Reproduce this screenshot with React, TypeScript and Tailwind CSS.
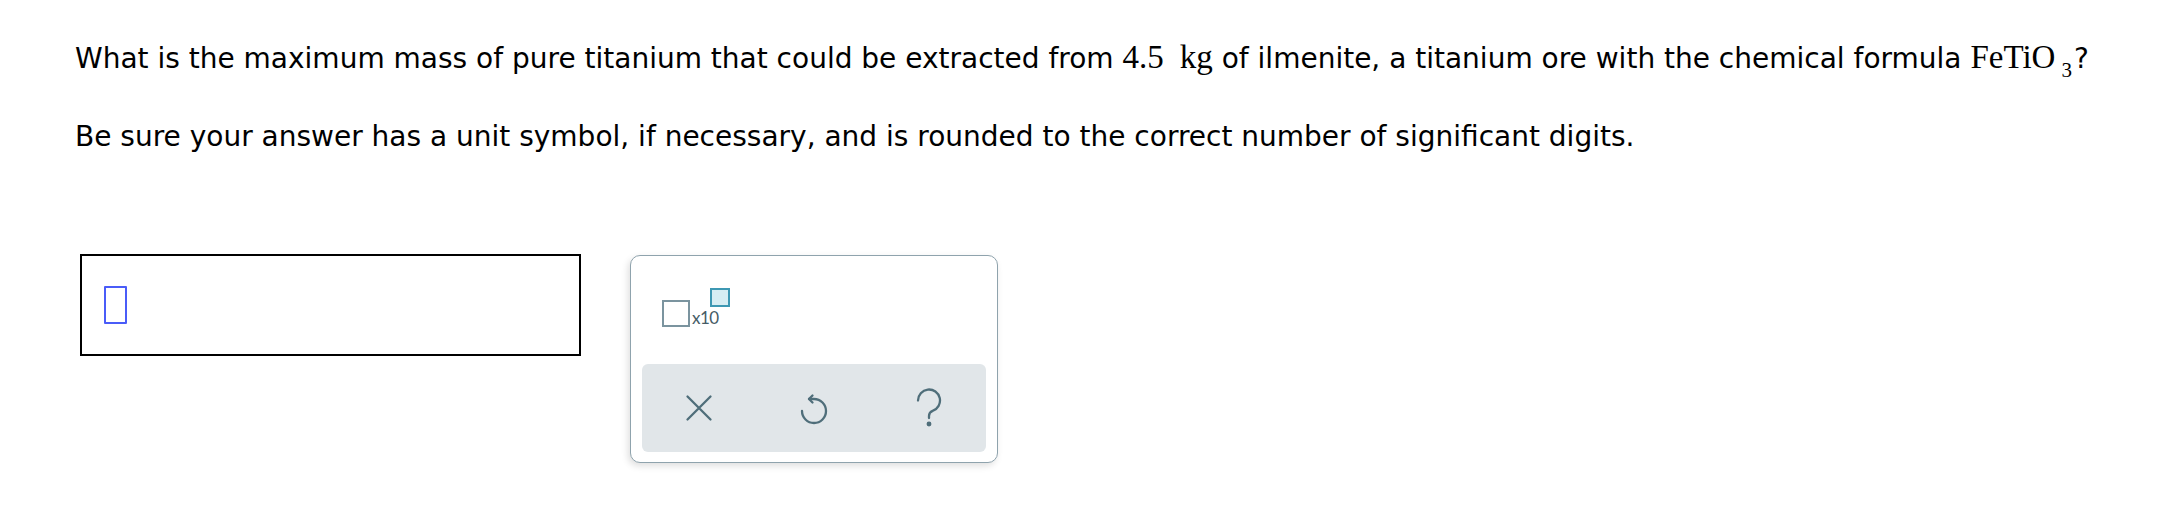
import React from 'react';

const Serif = ({ children }: { children: React.ReactNode }) => (
  <span className="font-['Liberation_Serif',serif] text-[33px]">{children}</span>
);

const UndoIcon = () => (
  <svg width="30" height="34" viewBox="0 0 30 34" fill="none" stroke="currentColor" strokeWidth="2.3" strokeLinecap="round" strokeLinejoin="round">
    <path d="M13.5 4.5 L10 8 L13.5 11.5" />
    <path d="M10 8 H15 A12 12 0 1 1 3 20" />
  </svg>
);

const ClearIcon = () => (
  <svg width="28" height="28" viewBox="0 0 28 28" fill="none" stroke="currentColor" strokeWidth="2.3" strokeLinecap="round">
    <path d="M2.5 2.5 L25.5 25.5 M25.5 2.5 L2.5 25.5" />
  </svg>
);

const HelpIcon = () => (
  <svg width="28" height="40" viewBox="0 0 28 40" fill="none" stroke="currentColor" strokeWidth="2.3" strokeLinecap="round">
    <path d="M3 12.5 A11 11 0 1 1 17.6 22.9 C15 24 14 25.5 14 28 V30" />
    <circle cx="14" cy="36" r="1.3" fill="currentColor" />
  </svg>
);

export default function App() {
  return (
    <div className="w-[2168px] h-[512px] bg-white font-['DejaVu_Sans',Verdana,sans-serif] text-[28px] text-black">
      <div className="pl-[75px] pt-[37px]">
        <p className="leading-[40px] h-[40px] whitespace-nowrap">
          What is the maximum mass of pure titanium that could be extracted from <Serif>4.5<span className="ml-[16px]">kg</span></Serif> of ilmenite, a titanium ore with the chemical formula{' '}
          <Serif>
            FeTiO<sub className="text-[21px] leading-none ml-[6px] mr-[2px] relative top-[9px] align-baseline">3</sub>
          </Serif>
          ?
        </p>
        <p className="mt-[45px] leading-[30px] whitespace-nowrap">
          Be sure your answer has a unit symbol, if necessary, and is rounded to the correct number of significant digits.
        </p>
      </div>

      <div className="flex items-start ml-[80px] mt-[102px] gap-[49px]">
        <div className="w-[501px] h-[102px] border-2 border-black flex items-center pl-[22px]">
          <div className="w-[23px] h-[38px] border-[2.5px] border-[#4a5cf8] rounded-[1px]" />
        </div>

        <div className="mt-[1px] w-[368px] h-[208px] border-[1.5px] border-[#8fa3ad] rounded-[10px] bg-white shadow-[-2px_3px_7px_rgba(0,0,0,0.13)] px-[11px] flex flex-col">
          <div className="h-[108px] pt-[32px] pl-[20px]">
            <div className="relative w-[70px] h-[40px]">
              <div className="absolute left-0 top-[12px] w-[28px] h-[27px] border-[2.5px] border-[#7b949f]" />
              <span className="absolute left-[30px] top-[20px] text-[17px] leading-[20px] text-[#465c66] font-['Lato',sans-serif] tracking-[-0.5px]">x10</span>
              <div className="absolute left-[48px] top-0 w-[20px] h-[19px] border-[2.5px] border-[#3e98b3] bg-[#d6edf3]" />
            </div>
          </div>
          <div className="h-[88px] rounded-[6px] bg-[#e1e6e9] grid grid-cols-3 items-center text-[#4f6e7a]">
            <div className="flex justify-center"><ClearIcon /></div>
            <div className="flex justify-center"><UndoIcon /></div>
            <div className="flex justify-center"><HelpIcon /></div>
          </div>
        </div>
      </div>
    </div>
  );
}
